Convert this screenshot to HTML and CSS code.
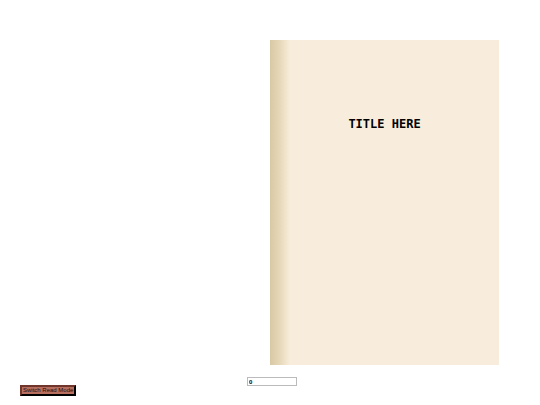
FILE: index.html
```
<!DOCTYPE html>
<html lang="en">

<head>
  <title>Book</title>
  <meta charset="UTF-8">
  <meta name="viewport" content="width=device-width, initial-scale=1">
  <link rel="stylesheet" href="styles.css">
</head>

<body>
  <main class="book">
    <section class="page">
      <h1 class="title">TITLE HERE</h1>
    </section>
  </main>
  <footer class="controls">
    <button class="read-mode" type="button">Switch Read Mode</button>
    <input class="page-number" type="text" value="0" aria-label="Page number">
  </footer>
</body>

</html>
```

FILE: styles.css
```
*{
  box-sizing:border-box;
}

body{
  display:flex;
  flex-direction:column;
  min-height:100vh;
  margin:0;
  background:#fff;
}

.book{
  flex:1;
  display:grid;
  grid-template-columns:1fr 1fr;
  padding:40px 41px 12px;
}

.page{
  grid-column:2;
  padding:76px 20px 20px;
  text-align:center;
  background:linear-gradient(to right, #d9c8a4 0, #e6d8b9 10px, #f3e7d1 17px, #f8eddc 20px);
}

.title{
  margin:0;
  font:bold 12px/16px "DejaVu Sans Mono", monospace;
  color:#000;
}

.controls{
  display:grid;
  grid-template-columns:1fr 50px 1fr;
  padding:0 16px 9px 20px;
}

.read-mode{
  justify-self:start;
  height:11px;
  margin-top:8px;
  padding:0 1px;
  border:2px outset #5a2a22;
  border-color:#70352b #260f0b #260f0b #70352b;
  background:#b86f60;
  font:6px/7px "Liberation Sans", sans-serif;
  color:#200c08;
  white-space:nowrap;
}

.page-number{
  width:100%;
  height:9px;
  padding:0 1px;
  border:1px solid #bbb;
  border-radius:0;
  background:#fff;
  font:bold 6px/7px "Liberation Sans", sans-serif;
  color:#000;
}
```
